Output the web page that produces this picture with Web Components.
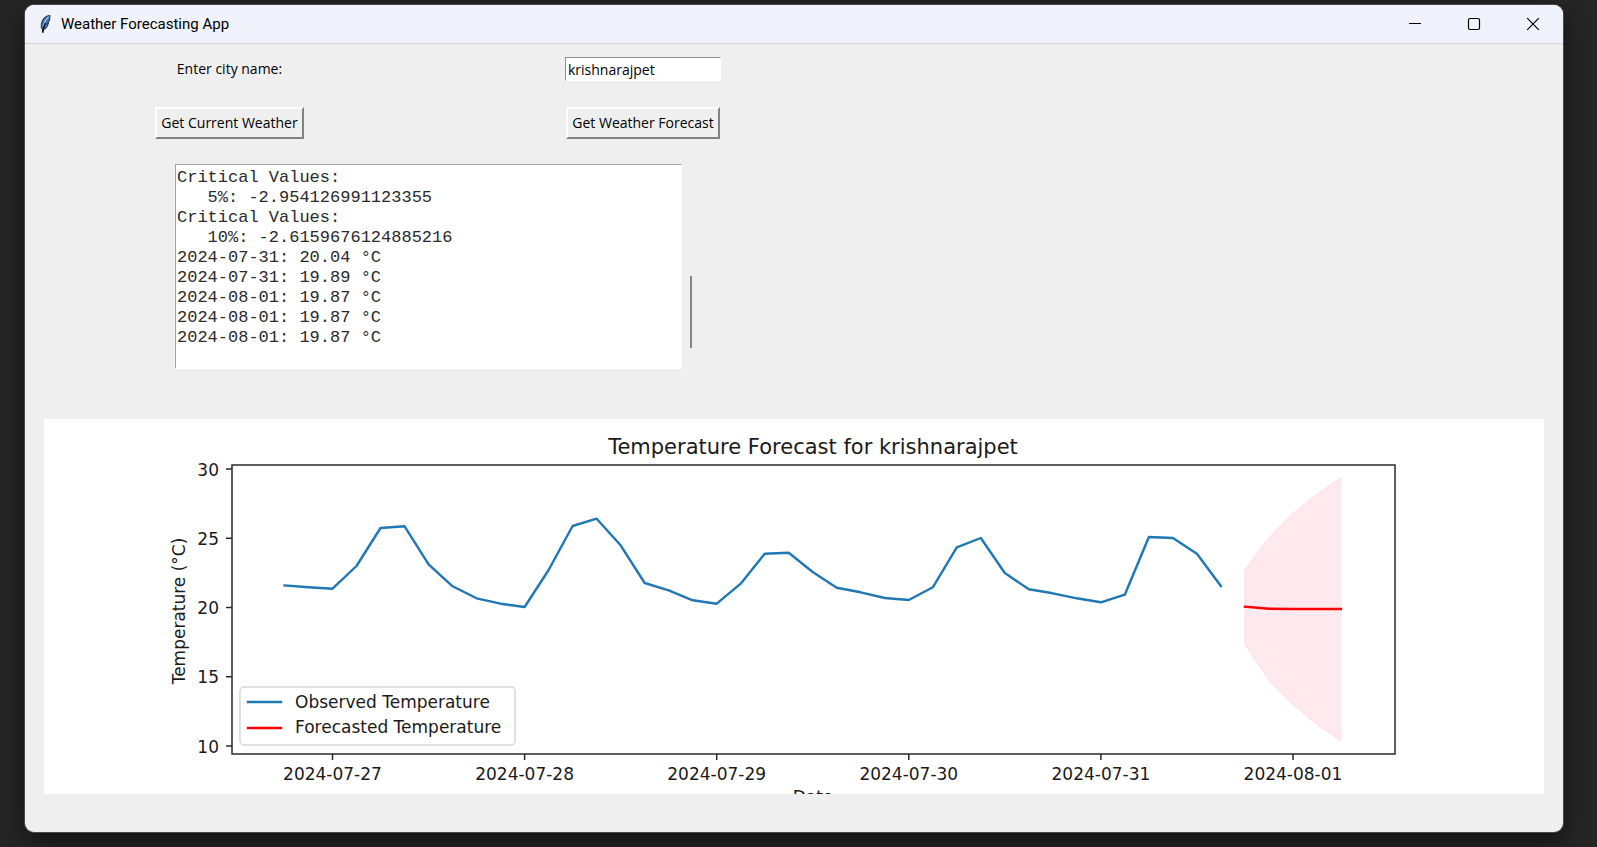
<!DOCTYPE html>
<html lang="en">
<head>
<meta charset="utf-8">
<title>Weather Forecasting App</title>
<style>
  body { margin: 0; min-height: 100vh; background: #262626; font-family: "Open Sans", "Noto Sans", sans-serif; font-size: 15px; color: #000; }
</style>
</head>
<body>
<app-window heading="Weather Forecasting App">
  <weather-form></weather-form>
  <forecast-chart city="krishnarajpet"></forecast-chart>
</app-window>

<script>
class AppWindow extends HTMLElement {
  constructor() {
    super();
    this.attachShadow({ mode: "open" }).innerHTML = `
      <style>
        :host { display: block; padding: 5px 34px 15px 25px; }
        .frame { background: #efefef; border-radius: 9px; overflow: hidden; box-shadow: 0 0 0 1px #4a4a4a, 0 8px 24px #101010; }
        header { display: flex; align-items: center; height: 38px; padding-right: 1px; background: #f0f3fb; border-bottom: 1px solid #d3d3d6; }
        .logo { width: 12px; height: 20px; margin-left: 14px; }
        h1 { flex: 1; margin: 0 0 0 10px; font-family: Roboto, sans-serif; font-size: 15px; font-weight: 400; line-height: 20px; }
        button { width: 59px; height: 38px; padding: 0; border: 0; background: none; display: grid; place-items: center; }
        button svg { width: 14px; height: 14px; }
        main { padding: 13px 19px 38px 0; }
      </style>
      <div class="frame">
        <header>
          <svg class="logo" viewBox="0 0 14 22" aria-hidden="true">
            <path d="M12.6 1.200C9 1.500 5.500 4 3.800 7.500C2.600 10 2.200 13 2.700 15.500L3.900 17.200L4.300 21L5.300 17.500C8 16.500 10 13.500 10.800 10.500L9.900 10.600L11.600 8.200C12.700 6 13 3.300 12.600 1.200Z" fill="#3c78c0" stroke="#333" stroke-width="1.200"/>
            <path d="M11.300 2.500C8.500 5 6 9 5.200 13.500" fill="none" stroke="#9cc4ee" stroke-width="1.300"/>
            <path d="M7.500 10C6.200 12.500 5 15.500 4.400 21" fill="none" stroke="#15171c" stroke-width="1.800"/>
          </svg>
          <h1></h1>
          <button type="button" aria-label="Minimize"><svg viewBox="0 0 14 14"><path d="M1 6.500H13" stroke="#000"/></svg></button>
          <button type="button" aria-label="Maximize"><svg viewBox="0 0 14 14"><rect x="1.500" y="1.500" width="11" height="11" rx="1.500" fill="none" stroke="#000" stroke-width="1.200"/></svg></button>
          <button type="button" aria-label="Close"><svg viewBox="0 0 14 14"><path d="M1.200 1.200L12.800 12.800M12.800 1.200L1.200 12.800" stroke="#000" stroke-width="1.200"/></svg></button>
        </header>
        <main><slot></slot></main>
      </div>`;
    this.shadowRoot.querySelector("h1").textContent = this.getAttribute("heading");
  }
}

class TkButton extends HTMLElement {
  constructor() {
    super();
    this.attachShadow({ mode: "open" }).innerHTML = `
      <style>
        :host { display: block; }
        button { height: 32px; padding: 0 4px; font: inherit; line-height: 20px; color: inherit; background: #efefef; white-space: nowrap;
          border: 2px solid; border-color: #fff #828282 #828282 #fff; border-radius: 0; }
      </style>
      <button type="button"><slot></slot></button>`;
  }
}

class WeatherForm extends HTMLElement {
  constructor() {
    super();
    this.attachShadow({ mode: "open" }).innerHTML = `
      <style>
        :host { display: block; font-size: 14px; margin-right: -19px; }
        form { display: grid; grid-template-columns: 409fr 418fr 711fr; justify-items: center; align-items: start; }
        label { line-height: 24px; }
        input { box-sizing: border-box; width: 156px; height: 24px; padding: 0 2px; font: inherit; color: inherit; background: #fff; border-radius: 0;
          border: 1px solid; border-color: #8f8f8f #fff #fff #8f8f8f; outline: 0; }
        tk-button { grid-row: 2; margin: 26px 0 25px; }
        .log { grid-row: 3; grid-column: 1 / 3; display: flex; align-items: flex-start; gap: 8px; margin-bottom: 50px; }
        textarea { box-sizing: border-box; display: block; width: 507px; height: 205px; padding: 3px 1px; border: 1px solid; border-color: #a3a3a3 #fff #fff #a3a3a3;
          border-radius: 0; outline: 0; resize: none; overflow: hidden; background: #fff; color: #2a2a2a;
          font-family: "Liberation Mono", monospace; font-size: 17px; line-height: 20px; white-space: pre; }
        .thumb { width: 2px; height: 72px; margin: 112px 10px 0 0; background: #858585; }
      </style>
      <form>
        <label for="city">Enter city name:</label>
        <input id="city" type="text" value="krishnarajpet">
        <tk-button>Get Current Weather</tk-button>
        <tk-button>Get Weather Forecast</tk-button>
        <div class="log">
          <textarea readonly aria-label="Forecast output">Critical Values:
   5%: -2.954126991123355
Critical Values:
   10%: -2.6159676124885216
2024-07-31: 20.04 °C
2024-07-31: 19.89 °C
2024-08-01: 19.87 °C
2024-08-01: 19.87 °C
2024-08-01: 19.87 °C
</textarea>
          <div class="thumb"></div>
        </div>
      </form>`;
  }
}

class ForecastChart extends HTMLElement {
  constructor() {
    super();
    const observed = [165.5,167.3,168.7,146,108,106.3,144.3,166.3,178.3,183.7,187,150,106,98.7,125.3,163,170.3,180.3,183.7,163.7,133.7,132.7,152,167.7,172.3,178,180,167.3,127.3,118,153,169.3,173.3,178.3,182.3,174.7,117,118,133.7,166];
    const forecast = [186.7,188.7,189,189,189];
    const upper = [150,117.7,93.3,74,58];
    const lower = [224,260.6,284.6,304.5,321];
    const x = i => (240.5 + 24.01 * i).toFixed(1);
    const line = (ys, from) => ys.map((y, i) => x(i + from) + "," + y).join(" ");
    const band = line(upper, 40) + " " + lower.map((y, i) => x(i + 40) + "," + y).reverse().join(" ");
    const yTicks = [30, 25, 20, 15, 10].map((v, i) => {
      const y = 49 + 69.25 * i;
      return `<path d="M182 ${y}H188"/><text x="175" y="${y + 6.5}" text-anchor="end">${v}</text>`;
    }).join("");
    const days = ["2024-07-27", "2024-07-28", "2024-07-29", "2024-07-30", "2024-07-31", "2024-08-01"];
    const xTicks = days.map((d, i) => {
      const px = 288.5 + 192.1 * i;
      return `<path d="M${px} 334V340"/><text x="${px}" y="360" text-anchor="middle">${d}</text>`;
    }).join("");
    this.attachShadow({ mode: "open" }).innerHTML = `
      <style>
        :host { display: block; margin-left: 19px; background: #fff; }
        svg { display: block; width: 100%; height: auto; overflow: hidden; font-family: "DejaVu Sans", sans-serif; font-size: 17px; fill: #1a1a1a; }
        .title { font-size: 21px; }
        .axes path, .axes rect { fill: none; stroke: #2a2a2a; stroke-width: 1.500; }
        .series { fill: none; stroke-width: 2.400; stroke-linejoin: round; stroke-linecap: square; }
        .blue { stroke: #1f77b4; }
        .red { stroke: #ff0000; }
      </style>
      <svg viewBox="0 -1 1500 375" role="img" aria-label="Temperature forecast">
        <polygon points="${band}" fill="#ffe9ee" stroke="#ffe0e6"/>
        <polyline class="series blue" points="${line(observed, 0)}"/>
        <polyline class="series red" points="${line(forecast, 40)}"/>
        <g class="axes"><rect x="188" y="45" width="1163" height="289"/>${yTicks}${xTicks}</g>
        <text class="title" x="769" y="34" text-anchor="middle">Temperature Forecast for ${this.getAttribute("city")}</text>
        <text transform="translate(141 191) rotate(-90)" text-anchor="middle">Temperature (°C)</text>
        <text x="769" y="383" text-anchor="middle">Date</text>
        <rect x="196" y="267" width="275" height="58" rx="4" fill="#fff" stroke="#d6d6d6" stroke-width="1.500"/>
        <path class="series blue" d="M204 282H237"/>
        <path class="series red" d="M204 308H237"/>
        <text x="251" y="288">Observed Temperature</text>
        <text x="251" y="313">Forecasted Temperature</text>
      </svg>`;
  }
}

customElements.define("app-window", AppWindow);
customElements.define("tk-button", TkButton);
customElements.define("weather-form", WeatherForm);
customElements.define("forecast-chart", ForecastChart);
</script>
</body>
</html>
